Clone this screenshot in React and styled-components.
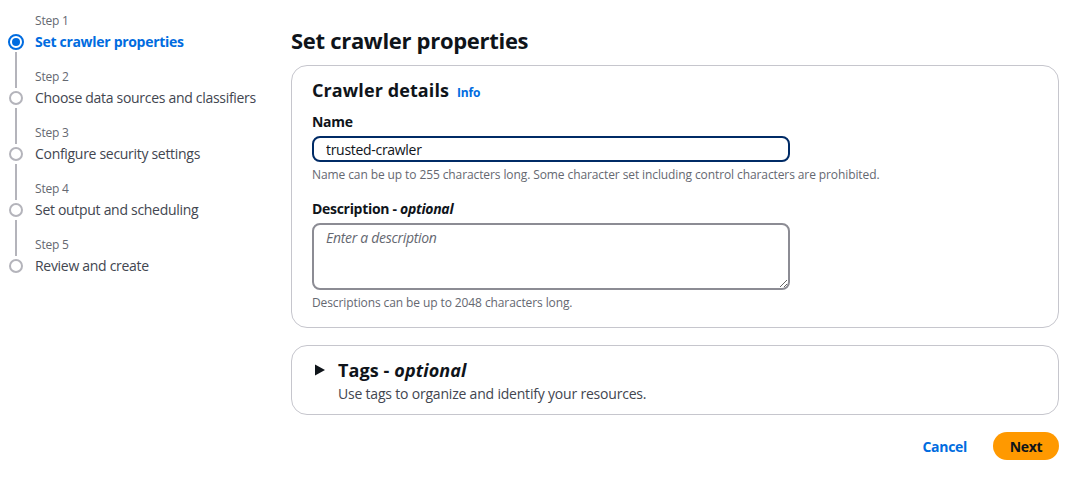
import React from "react";
import styled, { createGlobalStyle } from "styled-components";

const Global = createGlobalStyle`
  html, body { margin: 0; padding: 0; background: #ffffff; }
  body {
    font-family: "Open Sans", "Noto Sans", Arial, sans-serif;
    color: #0f141a;
    letter-spacing: -0.3px;
  }
  * { box-sizing: border-box; }
`;

const Page = styled.div`
  display: flex;
  align-items: flex-start;
  width: 1069px;
  height: 483px;
`;

const Nav = styled.nav`
  width: 291px;
  flex: none;
  padding: 13px 0 0 8px;
  display: flex;
  flex-direction: column;
`;

const Step = styled.div`
  display: grid;
  grid-template-columns: 16px 1fr;
  column-gap: 11px;
  grid-template-rows: 16px 26px 14px;
`;

const StepLabel = styled.div`
  grid-column: 2;
  grid-row: 1;
  font-size: 12px;
  line-height: 16px;
  color: #656871;
  letter-spacing: -0.2px;
`;

const Dot = styled.span`
  grid-column: 1;
  grid-row: 2;
  align-self: center;
  justify-self: center;
  width: ${p => (p.$active ? 16 : 14)}px;
  height: ${p => (p.$active ? 16 : 14)}px;
  border-radius: 50%;
  border: 2px solid ${p => (p.$active ? "#006ce0" : "#b4b4bb")};
  display: flex;
  align-items: center;
  justify-content: center;
  &::after {
    content: "";
    display: ${p => (p.$active ? "block" : "none")};
    width: 8px;
    height: 8px;
    border-radius: 50%;
    background: #006ce0;
  }
`;

const StepTitle = styled.div`
  grid-column: 2;
  grid-row: 2;
  align-self: center;
  font-size: 14px;
  line-height: 18px;
  font-weight: ${p => (p.$active ? 700 : 400)};
  color: ${p => (p.$active ? "#006ce0" : "#424650")};
`;

const Line = styled.span`
  grid-column: 1;
  grid-row: ${p => p.$row};
  justify-self: center;
  width: 2px;
  background: #b4b4bb;
  margin-top: ${p => (p.$row === 3 ? "-3px" : "0")};
  margin-bottom: ${p => (p.$row === 1 ? "-3px" : "0")};
`;

const Main = styled.main`
  flex: 1;
  padding: 26px 10px 0 0;
  display: flex;
  flex-direction: column;
`;

const PageTitle = styled.h1`
  margin: 0 0 11px;
  font-size: 22px;
  line-height: 28px;
  font-weight: 700;
`;

const Container = styled.section`
  border: 1px solid #c6c6cd;
  border-radius: 16px;
  padding: ${p => p.$pad};
  margin-bottom: 17px;
`;

const HeaderRow = styled.div`
  display: flex;
  align-items: baseline;
  gap: 8px;
  margin-bottom: 12px;
`;

const H2 = styled.h2`
  margin: 0;
  font-size: 18px;
  line-height: 22px;
  font-weight: 700;
  letter-spacing: 0.1px;
  em { font-style: italic; }
`;

const InfoLink = styled.a`
  font-size: 12px;
  font-weight: 700;
  color: #006ce0;
  text-decoration: none;
  letter-spacing: -0.2px;
`;

const Field = styled.div`
  display: flex;
  flex-direction: column;
  margin-bottom: ${p => p.$mb || 0}px;
`;

const Label = styled.label`
  font-size: 14px;
  line-height: 18px;
  font-weight: 700;
  margin-bottom: 5px;
  em { font-style: italic; }
`;

const TextInput = styled.input`
  width: 478px;
  height: 26px;
  border: 2px solid #002b66;
  border-radius: 8px;
  padding: 0 12px;
  font-family: inherit;
  font-size: 14px;
  letter-spacing: -0.3px;
  color: #0f141a;
  outline: none;
`;

const TextArea = styled.textarea`
  width: 478px;
  height: 67px;
  border: 2px solid #8c8c94;
  border-radius: 8px;
  padding: 3px 12px;
  font-family: inherit;
  font-size: 14px;
  letter-spacing: -0.3px;
  color: #0f141a;
  resize: vertical;
  outline: none;
  display: block;
  &::placeholder { color: #656871; font-style: italic; }
`;

const Help = styled.div`
  font-size: 12px;
  line-height: 16px;
  letter-spacing: -0.1px;
  color: #656871;
  margin-top: 5px;
`;

const ExpandRow = styled.div`
  display: grid;
  grid-template-columns: 14px 1fr;
  column-gap: 10px;
  align-items: center;
`;

const Caret = styled.svg`
  width: 12px;
  height: 12px;
  justify-self: start;
`;

const SubText = styled.div`
  grid-column: 2;
  font-size: 14px;
  line-height: 18px;
  letter-spacing: -0.2px;
  color: #424650;
  margin-top: 4px;
`;

const Actions = styled.div`
  display: flex;
  justify-content: flex-end;
  align-items: center;
  gap: 26px;
`;

const LinkButton = styled.button`
  border: none;
  background: none;
  padding: 0;
  font-family: inherit;
  font-size: 14px;
  letter-spacing: -0.3px;
  font-weight: 700;
  color: #006ce0;
  cursor: pointer;
`;

const PrimaryButton = styled.button`
  border: none;
  background: #ff9900;
  border-radius: 14px;
  height: 28px;
  width: 66px;
  font-family: inherit;
  font-size: 14px;
  letter-spacing: -0.3px;
  font-weight: 700;
  color: #0f141a;
  cursor: pointer;
`;

const steps = [
  "Set crawler properties",
  "Choose data sources and classifiers",
  "Configure security settings",
  "Set output and scheduling",
  "Review and create",
];

export default function App() {
  return (
    <>
      <Global />
      <Page>
        <Nav>
          {steps.map((s, i) => (
            <Step key={s}>
              {i > 0 && <Line $row={1} />}
              <StepLabel>Step {i + 1}</StepLabel>
              <Dot $active={i === 0} />
              <StepTitle $active={i === 0}>{s}</StepTitle>
              {i < steps.length - 1 && <Line $row={3} />}
            </Step>
          ))}
        </Nav>
        <Main>
          <PageTitle>Set crawler properties</PageTitle>
          <Container $pad="13px 20px 16px">
            <HeaderRow>
              <H2>Crawler details</H2>
              <InfoLink href="#">Info</InfoLink>
            </HeaderRow>
            <Field $mb={17}>
              <Label>Name</Label>
              <TextInput defaultValue="trusted-crawler" />
              <Help>Name can be up to 255 characters long. Some character set including control characters are prohibited.</Help>
            </Field>
            <Field>
              <Label>
                Description - <em>optional</em>
              </Label>
              <TextArea placeholder="Enter a description" />
              <Help>Descriptions can be up to 2048 characters long.</Help>
            </Field>
          </Container>
          <Container $pad="13px 20px 11px 22px">
            <ExpandRow>
              <Caret viewBox="0 0 12 12">
                <path d="M1 0.5 L11 6 L1 11.5 Z" fill="#0f141a" />
              </Caret>
              <H2>
                Tags - <em>optional</em>
              </H2>
              <SubText>Use tags to organize and identify your resources.</SubText>
            </ExpandRow>
          </Container>
          <Actions>
            <LinkButton>Cancel</LinkButton>
            <PrimaryButton>Next</PrimaryButton>
          </Actions>
        </Main>
      </Page>
    </>
  );
}
